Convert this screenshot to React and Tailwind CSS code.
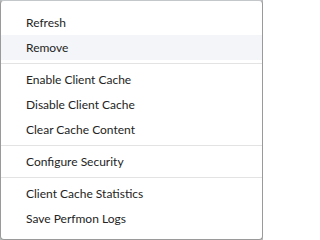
import React from 'react';

const groups = [
  ['Refresh', 'Remove'],
  ['Enable Client Cache', 'Disable Client Cache', 'Clear Cache Content'],
  ['Configure Security'],
  ['Client Cache Statistics', 'Save Perfmon Logs'],
];

export default function App() {
  return (
    <div className="w-[263px] h-[240px] bg-[#b9bcbf]">
      <div
        className="w-[263px] h-[240px] bg-white border border-[#9a9a9a] border-t-[#c4c7ca] rounded-[4px] pt-[9px] text-[12px] text-[#242424]"
        style={{ fontFamily: 'Lato, "Open Sans", sans-serif' }}
      >
        {groups.map((items, gi) => (
          <div key={gi}>
            {gi > 0 && <div className="mt-[3px] mb-[3px] h-px bg-[#e3e3e3]" />}
            {items.map((label) => (
              <div
                key={label}
                className={`h-[25px] flex items-center pt-px pl-[25px] ${label === 'Remove' ? 'bg-[#f4f5f8]' : ''}`}
              >
                {label}
              </div>
            ))}
          </div>
        ))}
      </div>
    </div>
  );
}
